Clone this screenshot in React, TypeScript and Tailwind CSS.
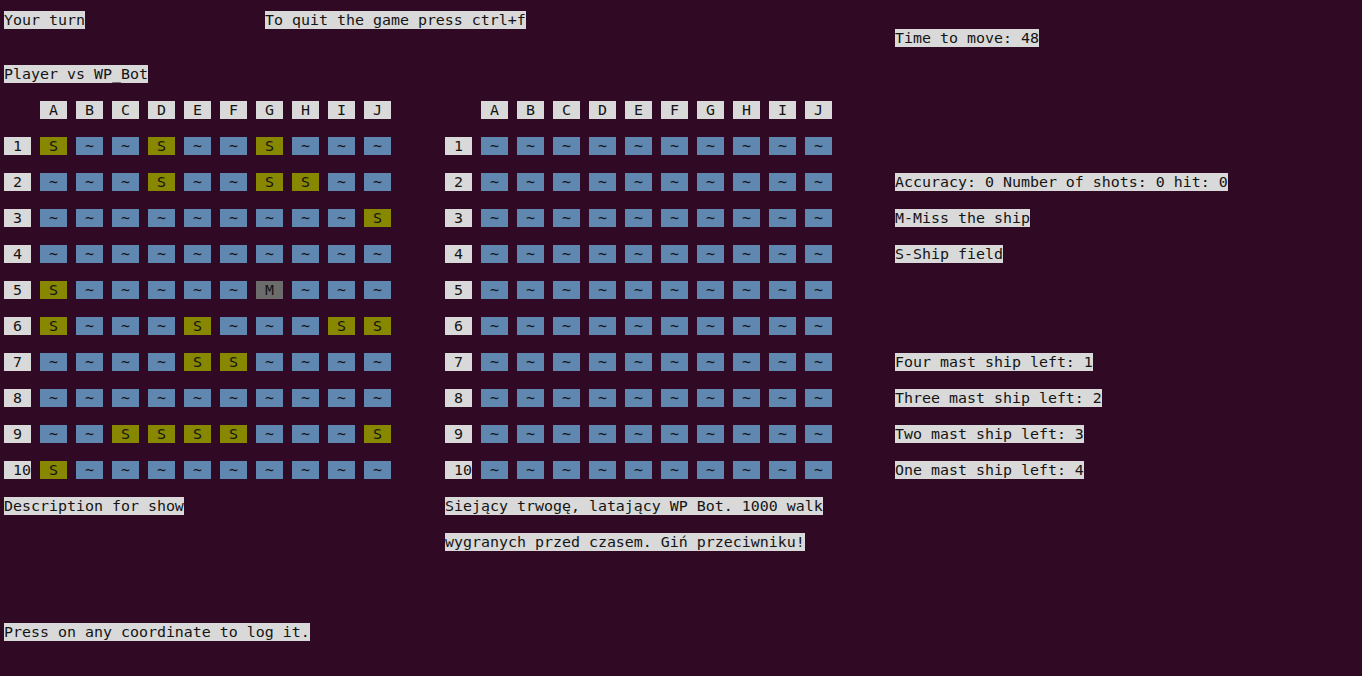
import React from "react";

const LEFT: string[] = [
  "S~~S~~S~~~",
  "~~~S~~SS~~",
  "~~~~~~~~~S",
  "~~~~~~~~~~",
  "S~~~~~M~~~",
  "S~~~S~~~SS",
  "~~~~SS~~~~",
  "~~~~~~~~~~",
  "~~SSSS~~~S",
  "S~~~~~~~~~",
];
const RIGHT: string[] = Array.from({ length: 10 }, () => "~~~~~~~~~~");
const LETTERS = ["A", "B", "C", "D", "E", "F", "G", "H", "I", "J"];

function Hl({ children }: { children: React.ReactNode }) {
  return <span className="bg-[#d9d9d9] text-[#141414] whitespace-pre">{children}</span>;
}

function Cell({ v }: { v: string }) {
  const cls =
    v === "S"
      ? "bg-[#878700]"
      : v === "M"
      ? "bg-[#6c6c6c]"
      : v === "~"
      ? "bg-[#5f87af]"
      : "bg-[#d9d9d9]";
  return (
    <div className={`w-[27px] h-[18px] flex items-center justify-center text-[#141414] ${cls}`}>
      {v}
    </div>
  );
}

function HeaderRow() {
  return (
    <div className="flex gap-[9px] pl-[36px] h-[18px]">
      {LETTERS.map((l) => (
        <Cell key={l} v={l} />
      ))}
    </div>
  );
}

function BoardRow({ n, row }: { n: number; row: string }) {
  return (
    <div className="flex gap-[9px] h-[18px]">
      <div className="w-[27px] h-[18px] bg-[#d9d9d9] text-[#141414] whitespace-pre">
        {" " + String(n).padEnd(2, " ")}
      </div>
      {row.split("").map((c, i) => (
        <Cell key={i} v={c} />
      ))}
    </div>
  );
}

function Line({
  left,
  mid,
  right,
}: {
  left?: React.ReactNode;
  mid?: React.ReactNode;
  right?: React.ReactNode;
}) {
  return (
    <div className="grid grid-cols-[441px_450px_1fr] h-[18px] leading-[18px]">
      <div className="flex">{left}</div>
      <div className="flex">{mid}</div>
      <div className="flex">{right}</div>
    </div>
  );
}

export default function App() {
  const rightInfo: Record<number, string> = {
    1: "Accuracy: 0 Number of shots: 0 hit: 0",
    2: "M-Miss the ship",
    3: "S-Ship field",
    6: "Four mast ship left: 1",
    7: "Three mast ship left: 2",
    8: "Two mast ship left: 3",
    9: "One mast ship left: 4",
  };

  const boardLines: React.ReactNode[] = [];
  for (let i = 0; i < 10; i++) {
    boardLines.push(
      <Line
        key={`b${i}`}
        left={<BoardRow n={i + 1} row={LEFT[i]} />}
        mid={<BoardRow n={i + 1} row={RIGHT[i]} />}
        right={i === 0 ? null : rightInfo[i] ? <Hl>{rightInfo[i]}</Hl> : null}
      />
    );
    if (i < 9) {
      const r = rightInfo[i + 0.5 as unknown as number];
      boardLines.push(<Line key={`s${i}`} right={r ? <Hl>{r}</Hl> : null} />);
    }
  }

  return (
    <div
      className="min-h-screen w-full bg-[#300a24] pt-[11px] pl-[4px] text-[14.95px] leading-[18px] overflow-hidden"
      style={{ fontFamily: '"DejaVu Sans Mono", "Liberation Mono", monospace' }}
    >
      <div className="flex h-[18px]">
        <div className="w-[261px]">
          <Hl>Your turn</Hl>
        </div>
        <Hl>To quit the game press ctrl+f</Hl>
      </div>
      <Line right={<Hl>Time to move: 48</Hl>} />
      <Line />
      <Line left={<Hl>Player vs WP_Bot</Hl>} />
      <Line />
      <Line left={<HeaderRow />} mid={<HeaderRow />} />
      <Line />
      {boardLines}
      <Line />
      <Line left={<Hl>Description for show</Hl>} mid={<Hl>Siejący trwogę, latający WP Bot. 1000 walk</Hl>} />
      <Line />
      <Line mid={<Hl>wygranych przed czasem. Giń przeciwniku!</Hl>} />
      <Line />
      <Line />
      <Line />
      <Line />
      <Line left={<Hl>Press on any coordinate to log it.</Hl>} />
    </div>
  );
}
